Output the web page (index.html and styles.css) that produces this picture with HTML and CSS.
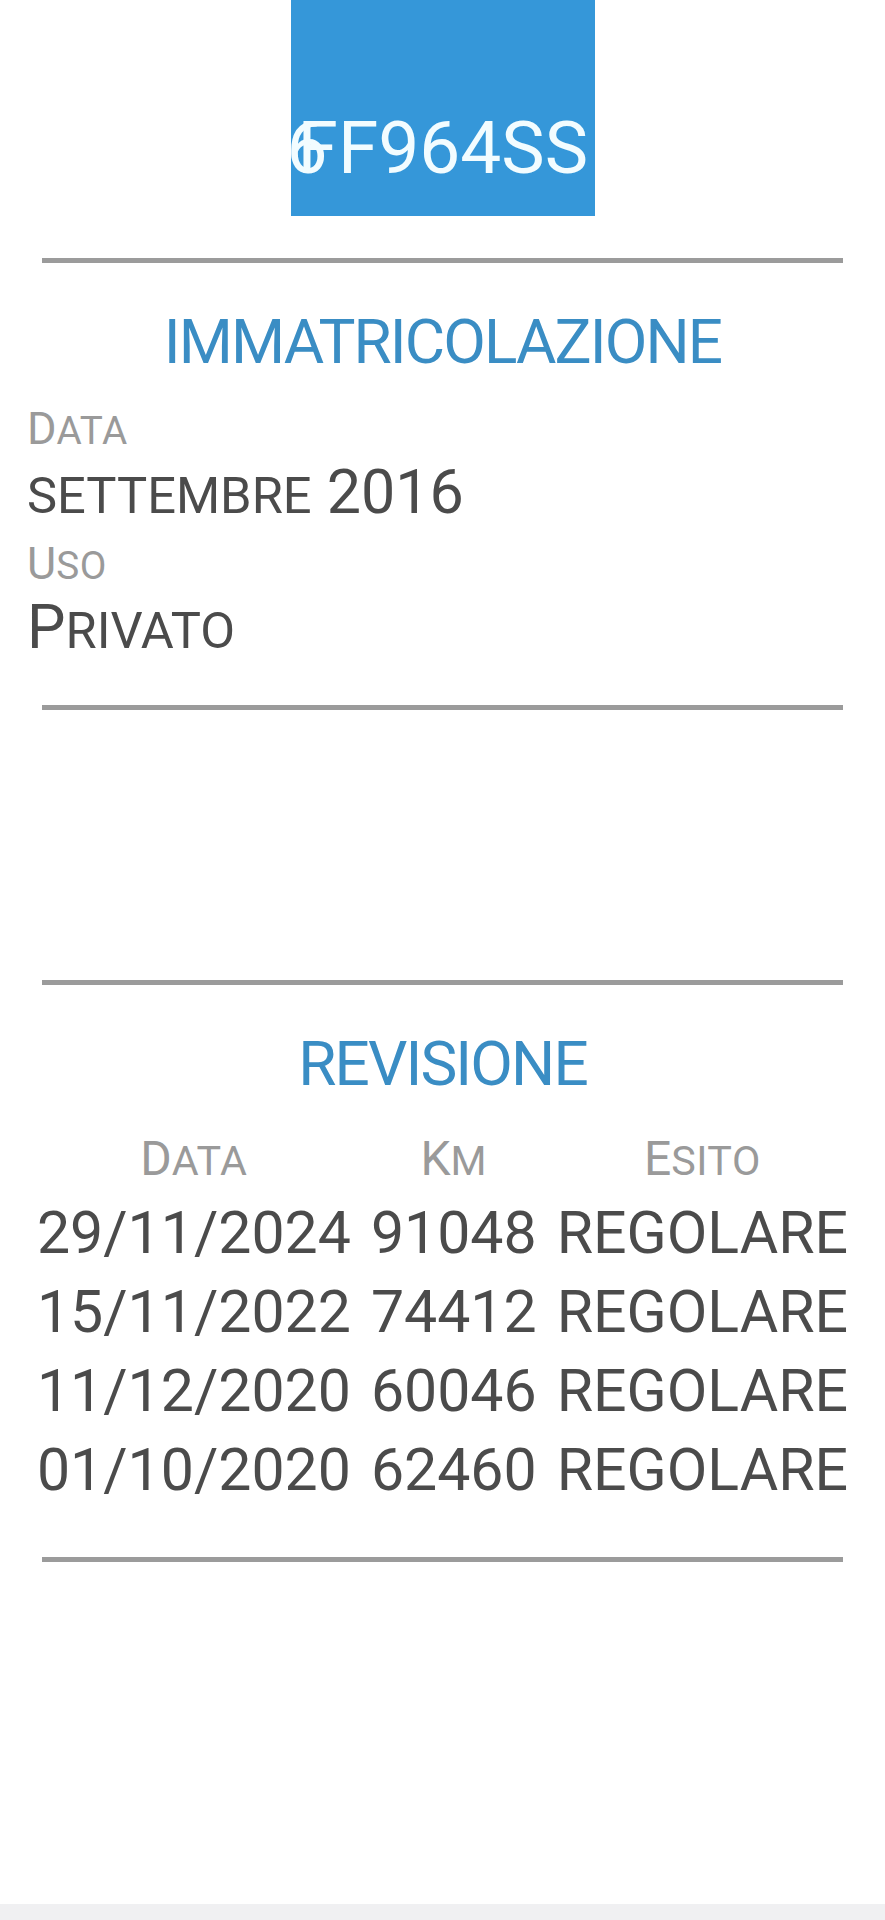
FILE: index.html
```html
<!DOCTYPE html>
<html lang="it">
<head>
<meta charset="utf-8">
<title>Veicolo FF964SS</title>
<link rel="stylesheet" href="styles.css">
</head>
<body>
<main class="page">
  <div class="plate"><span class="plate-text"><span class="ghost">6</span>FF964SS</span></div>

  <hr class="rule rule-first">

  <section class="block">
    <h2 class="heading">IMMATRICOLAZIONE</h2>
    <div class="info">
      <div class="label"><span class="big">D</span><span class="sc">ata</span></div>
      <div class="value"><span class="sc2">settembre</span> 2016</div>
      <div class="label label-next"><span class="big">U</span><span class="sc">so</span></div>
      <div class="value"><span class="big">P</span><span class="sc2">rivato</span></div>
    </div>
  </section>

  <hr class="rule rule-after-info">

  <hr class="rule rule-revision">

  <section class="block">
    <h2 class="heading">REVISIONE</h2>
    <div class="table">
      <div class="th"><span class="big">D</span><span class="sc">ata</span></div>
      <div class="th"><span class="big">K</span><span class="sc">m</span></div>
      <div class="th"><span class="big">E</span><span class="sc">sito</span></div>

      <div class="td">29/11/2024</div><div class="td">91048</div><div class="td">REGOLARE</div>
      <div class="td">15/11/2022</div><div class="td">74412</div><div class="td">REGOLARE</div>
      <div class="td">11/12/2020</div><div class="td">60046</div><div class="td">REGOLARE</div>
      <div class="td">01/10/2020</div><div class="td">62460</div><div class="td">REGOLARE</div>
    </div>
  </section>

  <hr class="rule rule-last">
</main>
<div class="navbar"></div>
</body>
</html>
```

FILE: styles.css
```css
* { box-sizing: border-box; }

html, body {
  margin: 0;
  padding: 0;
}

body {
  background: #ffffff;
  font-family: Roboto, "Liberation Sans", sans-serif;
  width: 885px;
}

.page {
  height: 1904px;
  background: #ffffff;
  display: flex;
  flex-direction: column;
}

.navbar {
  height: 16px;
  background: #f0f0f2;
}

/* plate */
.plate {
  width: 304px;
  height: 216px;
  margin: 0 auto;
  background: #3597d9;
  padding-top: 112px;
  text-align: left;
  white-space: nowrap;
}

.plate-text {
  font-size: 73px;
  line-height: 72px;
  color: #f2fcff;
  display: inline-block;
  margin-left: -4px;
}

.ghost {
  display: inline-block;
  margin-right: -30px;
}

/* rules */
.rule {
  border: 0;
  margin: 0 42px;
  height: 5px;
  background: #9b9b9b;
  flex: none;
}

.rule-first { margin-top: 42px; }
.rule-after-info { margin-top: 44px; }
.rule-revision { margin-top: 270px; }
.rule-last { margin-top: 48px; }

/* headings */
.heading {
  margin: 48px 0 0;
  font-weight: 400;
  font-size: 62px;
  line-height: 62px;
  letter-spacing: -1.9px;
  color: #3a8dc4;
  text-align: center;
}

/* info */
.info {
  margin-top: 26px;
  padding-left: 27px;
}

.label {
  font-size: 45px;
  line-height: 60px;
  color: #9a9a9a;
}

.label-next { margin-top: 8px; }

.value {
  font-size: 61px;
  line-height: 67px;
  color: #4b4b4b;
}

.sc {
  text-transform: uppercase;
  font-size: 0.86em;
  line-height: 1;
  letter-spacing: 0.5px;
}

.sc2 {
  text-transform: uppercase;
  font-size: 0.83em;
  line-height: 1;
}

/* table */
.table {
  margin-top: 36px;
  display: grid;
  grid-template-columns: auto auto auto;
  justify-content: center;
  column-gap: 20px;
}

.th {
  font-size: 48px;
  line-height: 56px;
  color: #9a9a9a;
  text-align: center;
  margin-bottom: 6px;
}

.td {
  font-size: 59px;
  line-height: 79px;
  color: #4b4b4b;
  text-align: center;
  white-space: nowrap;
}
```
